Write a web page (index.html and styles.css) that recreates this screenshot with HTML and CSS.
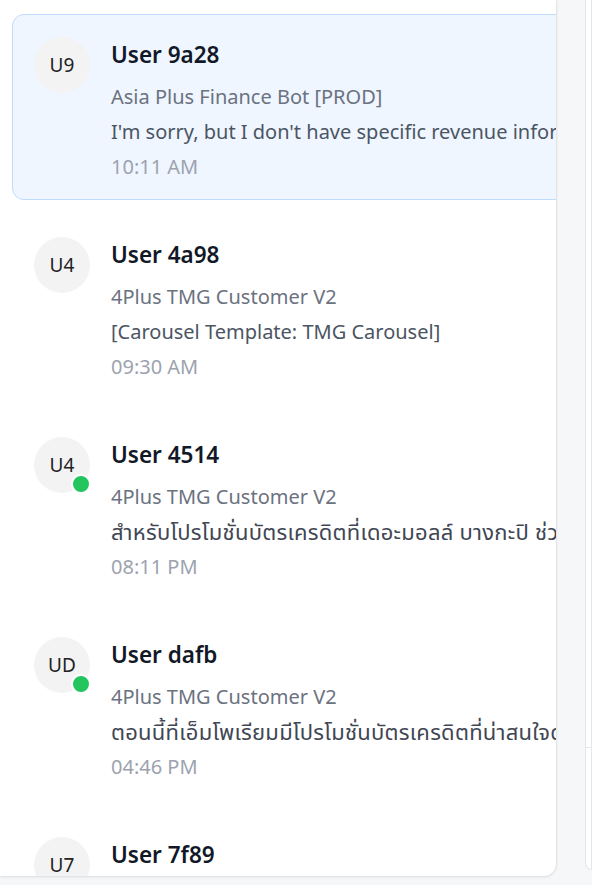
FILE: index.html
```html
<!DOCTYPE html>
<html lang="en">
<head>
<meta charset="utf-8">
<title>Conversations</title>
<link rel="stylesheet" href="styles.css">
</head>
<body>
<div class="layout">
  <section class="list-panel">
    <ul class="conv-list">
      <li class="conv active">
        <div class="avatar">U9</div>
        <div class="conv-body">
          <div class="conv-name">User 9a28</div>
          <div class="conv-bot">Asia Plus Finance Bot [PROD]</div>
          <div class="conv-msg">I'm sorry, but I don't have specific revenue information for that period.</div>
          <div class="conv-time">10:11 AM</div>
        </div>
      </li>
      <li class="conv">
        <div class="avatar">U4</div>
        <div class="conv-body">
          <div class="conv-name">User 4a98</div>
          <div class="conv-bot">4Plus TMG Customer V2</div>
          <div class="conv-msg">[Carousel Template: TMG Carousel]</div>
          <div class="conv-time">09:30 AM</div>
        </div>
      </li>
      <li class="conv">
        <div class="avatar online">U4</div>
        <div class="conv-body">
          <div class="conv-name">User 4514</div>
          <div class="conv-bot">4Plus TMG Customer V2</div>
          <div class="conv-msg thai">สำหรับโปรโมชั่นบัตรเครดิตที่เดอะมอลล์ บางกะปิ ช่วงนี้มีหลายรายการค่ะ</div>
          <div class="conv-time">08:11 PM</div>
        </div>
      </li>
      <li class="conv">
        <div class="avatar online">UD</div>
        <div class="conv-body">
          <div class="conv-name">User dafb</div>
          <div class="conv-bot">4Plus TMG Customer V2</div>
          <div class="conv-msg thai">ตอนนี้ที่เอ็มโพเรียมมีโปรโมชั่นบัตรเครดิตที่น่าสนใจดังนี้ค่ะ</div>
          <div class="conv-time">04:46 PM</div>
        </div>
      </li>
      <li class="conv">
        <div class="avatar">U7</div>
        <div class="conv-body">
          <div class="conv-name">User 7f89</div>
          <div class="conv-bot">4Plus TMG Customer V2</div>
          <div class="conv-msg">ขอบคุณค่ะ</div>
          <div class="conv-time">03:12 PM</div>
        </div>
      </li>
    </ul>
  </section>
  <section class="detail-panel">
    <div class="detail-main"></div>
    <div class="detail-footer"></div>
  </section>
</div>
</body>
</html>
```
FILE: styles.css
```css
* { box-sizing: border-box; }
html, body { margin: 0; padding: 0; }
body {
  background: #f6f7f9;
  font-family: "Noto Sans", "Noto Sans Thai", "DejaVu Sans", sans-serif;
  width: 592px;
  height: 885px;
  overflow: hidden;
}
.layout {
  display: flex;
  gap: 29px;
  height: 885px;
}
.list-panel {
  flex: 0 0 556px;
  height: 876px;
  background: #fff;
  border-radius: 0 0 12px 0;
  box-shadow: 0 1px 3px rgba(0,0,0,0.10), 1px 0 2px rgba(0,0,0,0.05);
  overflow: hidden;
}
.conv-list {
  list-style: none;
  margin: 0;
  padding: 14px 0 0 12px;
  display: flex;
  flex-direction: column;
  gap: 14px;
  width: 620px;
}
.conv {
  display: flex;
  gap: 21px;
  height: 186px;
  padding: 22px 22px 0 21px;
  border: 1px solid transparent;
  border-radius: 12px;
  flex-shrink: 0;
}
.conv.active {
  background: #eff6ff;
  border-color: #bfdbfe;
}
.avatar {
  position: relative;
  flex: 0 0 56px;
  width: 56px;
  height: 56px;
  border-radius: 50%;
  background: #f3f3f3;
  color: #222;
  font-size: 19px;
  display: flex;
  align-items: center;
  justify-content: center;
}
.avatar.online::after {
  content: "";
  position: absolute;
  right: -1px;
  bottom: -1px;
  width: 16px;
  height: 16px;
  border-radius: 50%;
  background: #22c55e;
  border: 2px solid #fff;
}
.conv-body {
  min-width: 0;
  padding-top: 3px;
  white-space: nowrap;
}
.conv-name {
  font-size: 22.5px;
  line-height: 30px;
  font-weight: 600;
  color: #111827;
  margin-bottom: 9px;
}
.conv-bot, .conv-msg, .conv-time {
  font-size: 20px;
  line-height: 35px;
}
.conv-bot { color: #6b7280; }
.conv-msg { color: #4b5563; }
.conv-msg.thai {
  font-size: 22px;
  letter-spacing: 0.25px;
  color: #3f4654;
}
.conv-time { color: #9ca3af; }
.detail-panel {
  flex: 1;
  height: 870px;
  background: #fff;
  border: 1px solid #e5e7eb;
  border-top: none;
  border-radius: 0 0 0 12px;
  display: flex;
  flex-direction: column;
}
.detail-main {
  flex: 0 0 748px;
  border-bottom: 1px solid #e5e7eb;
}
.detail-footer { flex: 1; }
```
